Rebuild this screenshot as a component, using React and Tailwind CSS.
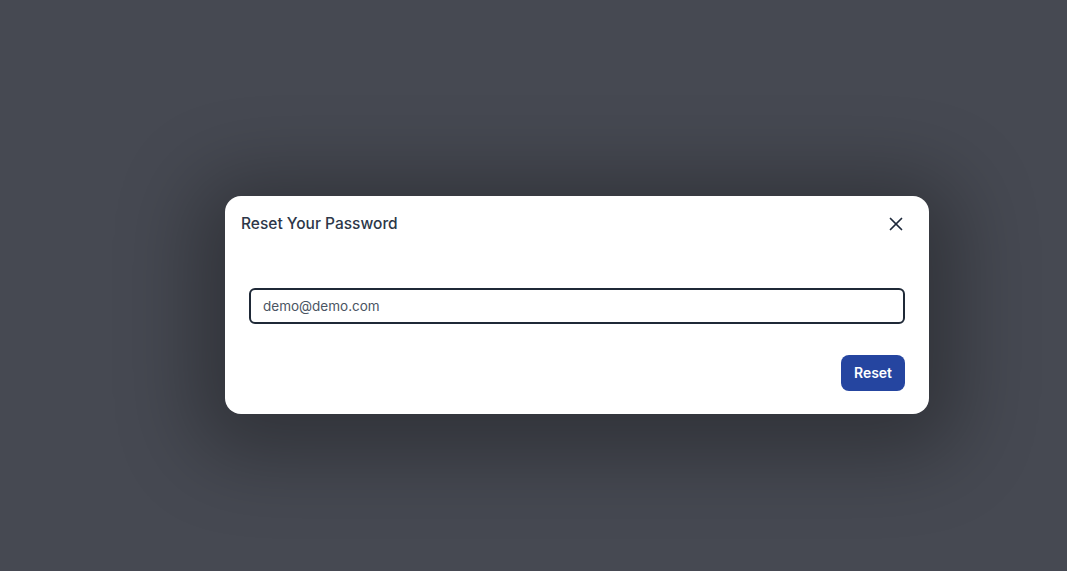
import { X } from "lucide-react";

export default function App() {
  return (
    <div
      className="min-h-[571px] w-full bg-[#464952] pt-[196px] pl-[225px]"
      style={{ fontFamily: "Inter, 'Noto Sans', sans-serif" }}
    >
      <div className="w-[704px] rounded-2xl bg-white shadow-[0_12px_80px_30px_rgba(0,0,0,0.3)]">
        <div className="flex items-center justify-between pl-4 pr-[22px] pt-4">
          <h2 className="text-[15.5px] leading-6 font-medium text-[#2d3748]">
            Reset Your Password
          </h2>
          <button className="text-[#1e293b]">
            <X size={22} strokeWidth={1.9} />
          </button>
        </div>

        <div className="px-6 pt-[52px] pb-[23px]">
          <input
            type="email"
            defaultValue="demo@demo.com"
            className="h-9 w-full rounded-md border-2 border-[#1f2937] px-3 text-[13.5px] text-[#4b5563] outline-none"
          />
          <div className="mt-[31px] flex justify-end">
            <button className="h-9 w-16 rounded-lg bg-[#2545a0] text-sm font-semibold text-white">
              Reset
            </button>
          </div>
        </div>
      </div>
    </div>
  );
}
